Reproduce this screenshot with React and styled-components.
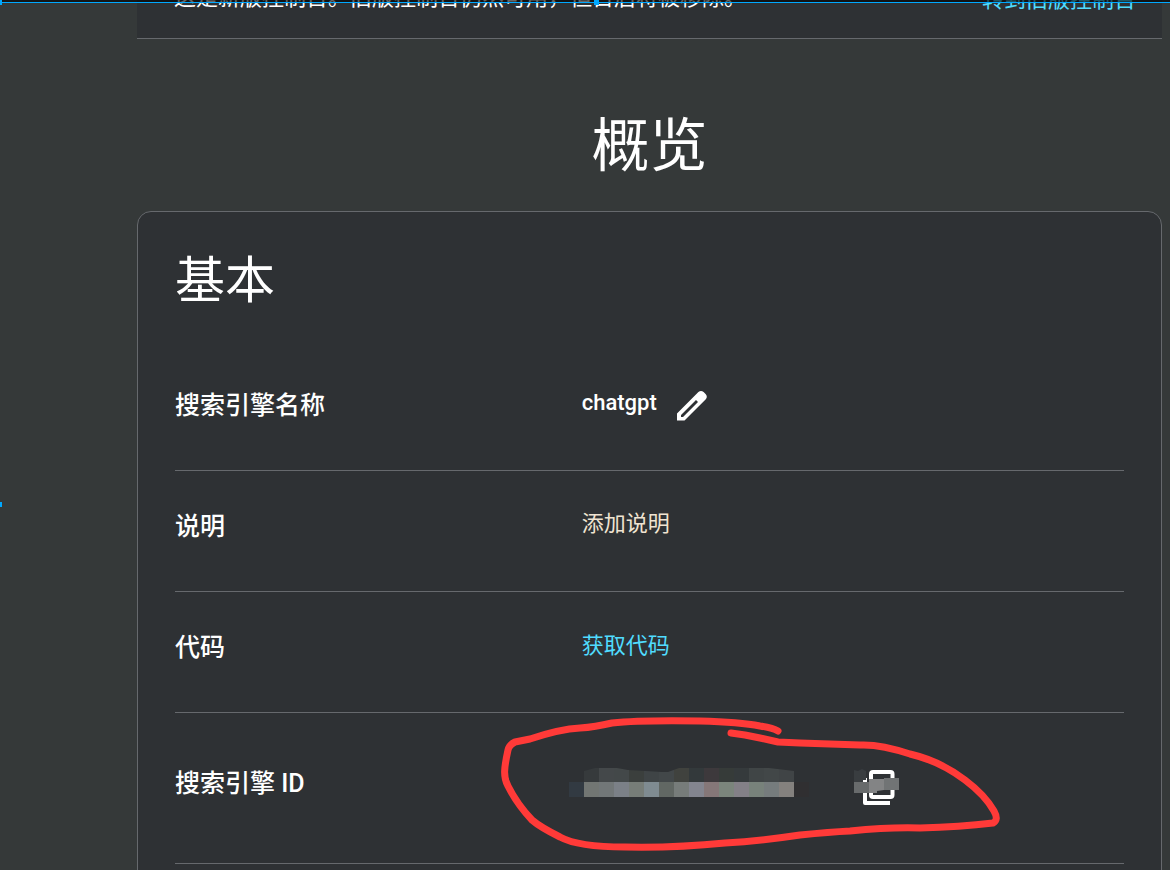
import React from 'react';
import styled, { createGlobalStyle } from 'styled-components';

const MOSAIC_TOP = ['#363a3c', '#44484a', '#434849', '#3b3f3d', '#3f4446', '#424749', '#40423e', '#33393b', '#3d393c', '#363b39', '#353a3c', '#404546', '#424748', '#404446'];
const MOSAIC_BOTTOM = ['#727673', '#727778', '#7b8087', '#777d78', '#7f8b91', '#616763', '#777c7a', '#83858f', '#857778', '#7b857c', '#838087', '#78827b', '#767c7d', '#84817e'];

function Row({ label, tall, children }) {
  return (
    <RowContainer $tall={tall}>
      <Label>{label}</Label>
      <Value $tall={tall}>{children}</Value>
    </RowContainer>
  );
}

function HiddenId() {
  return (
    <Mosaic viewBox="0 0 240 34" shapeRendering="crispEdges" aria-hidden="true">
      <clipPath id="top">
        <path d="M15 4L26 1H48L59 3L77 4L93 5H99L110 1H200L217 3L225 4V15H15Z" />
      </clipPath>
      <g clipPath="url(#top)">
        {MOSAIC_TOP.map((color, i) => (
          <rect key={i} x={15 + i * 15} y="0" width="15" height="15" fill={color} />
        ))}
      </g>
      <rect x="0" y="15" width="15" height="15" fill="#323a42" />
      {MOSAIC_BOTTOM.map((color, i) => (
        <rect key={i} x={15 + i * 15} y="15" width="15" height="15" fill={color} />
      ))}
      <rect x="225" y="15" width="15" height="15" fill="#302f31" />
    </Mosaic>
  );
}

function App() {
  return (
    <Page>
      <GlobalStyle />
      <Shade>
        <Handle />
        <Handle $middle />
      </Shade>
      <SideHandle />
      <Main>
        <Banner>
          <span>这是新版控制台。旧版控制台仍然可用，但日后将被移除。</span>
          <BannerLink href="#old">转到旧版控制台</BannerLink>
        </Banner>
        <Heading>概览</Heading>
        <Card>
          <CardTitle>基本</CardTitle>
          <Row label="搜索引擎名称">
            <Name>chatgpt</Name>
            <IconButton type="button" aria-label="修改名称">
              <svg width="30" height="30" viewBox="0 0 30 30">
                <path
                  fill="#fff"
                  fillRule="evenodd"
                  d="M0 22.5L21.4 1.1Q24 -1 26.6 1.1L28.8 3.3Q30.8 5.8 28.8 8.2L7.5 29.5H0ZM4 24V26H6L21 11L19 9Z"
                />
              </svg>
            </IconButton>
          </Row>
          <Row label="说明">
            <Hint>添加说明</Hint>
          </Row>
          <Row label="代码">
            <CodeLink href="#code">获取代码</CodeLink>
          </Row>
          <Row label="搜索引擎 ID" tall>
            <HiddenId />
            <CopyButton type="button" aria-label="复制">
              <svg width="46" height="44" viewBox="0 -6 46 44">
                <rect x="17" y="4" width="21.5" height="25" rx="2" fill="none" stroke="#fff" strokeWidth="4" />
                <path d="M11 10V35H36" fill="none" stroke="#fff" strokeWidth="4" strokeLinejoin="round" />
                <path d="M0 2L4 3L8 1L12 3V12H9V14H0Z" fill="#393d40" />
                <path d="M0 14H15V25H0Z" fill="#686b6c" />
                <path d="M15 11H30V22L23 23V25H15Z" fill="#838485" />
                <path d="M30 10H45V22H30Z" fill="#717475" />
              </svg>
            </CopyButton>
            <Scribble viewBox="500 713 500 150" aria-hidden="true">
              <path d="M778 731Q773 728 760 726Q740 722 700 721Q640 720 612 723Q595 727 580 728Q560 729 530 739L515 742Q509 745 508 750C504 768 503 777 508 786Q517 804 532 820Q540 827 560 837Q578 847 625 847Q675 848 725 843Q760 841 800 835Q830 832 850 831Q890 827 920 828Q960 827 993 823Q999 820 994 811Q985 795 965 780Q940 761 910 754Q880 744 860 745L800 743L778 742L760 738L745 735L731 733" />
            </Scribble>
          </Row>
        </Card>
      </Main>
    </Page>
  );
}

export default App;

const GlobalStyle = createGlobalStyle`
  * {
    box-sizing: border-box;
  }

  body {
    margin: 0;
    background-color: #353939;
    color: #fff;
    font-family: Roboto, 'Noto Sans CJK SC', sans-serif;
    overflow: hidden;
  }
`;

const Page = styled.div`
  position: relative;
  height: 100vh;
  overflow: hidden;
`;

const Shade = styled.div`
  position: absolute;
  z-index: 1;
  top: 0;
  left: 0;
  right: 0;
  height: 3px;
  background-color: rgba(0, 0, 0, 0.6);
  border-bottom: 1px solid #00a8ff;
`;

const Handle = styled.i`
  position: absolute;
  top: 0;
  left: ${({ $middle }) => ($middle ? '51%' : '0')};
  width: ${({ $middle }) => ($middle ? '5px' : '2px')};
  height: 5px;
  margin-left: ${({ $middle }) => ($middle ? '-3px' : '0')};
  background-color: #00a8ff;
`;

const SideHandle = styled.i`
  position: absolute;
  left: 0;
  top: 58%;
  width: 2px;
  height: 5px;
  margin-top: -3px;
  background-color: #00a8ff;
`;

const Main = styled.main`
  margin: 0 8px 0 137px;
`;

const Banner = styled.div`
  display: flex;
  justify-content: space-between;
  margin-top: -16px;
  padding: 0 26px 24px 37px;
  border-bottom: 1px solid #66696d;
  background-color: #2e3134;
  font-size: 22px;
  line-height: 28px;
`;

const Link = styled.a`
  color: #50dcff;
  font-size: 22px;
  text-decoration: none;
`;

const BannerLink = styled(Link)`
  padding-top: 2px;
`;

const Heading = styled.h1`
  margin: 67px 0 25px;
  font-size: 58px;
  font-weight: 400;
  line-height: 80px;
  text-align: center;
`;

const Card = styled.section`
  padding: 34px 37px;
  border: 1px solid #66696d;
  border-radius: 14px;
  background-color: #2e3134;
`;

const CardTitle = styled.h2`
  margin: 0 0 34px;
  font-size: 50px;
  font-weight: 400;
  line-height: 70px;
`;

const RowContainer = styled.div`
  position: relative;
  display: grid;
  grid-template-columns: 3fr 4fr;
  align-items: center;
  height: ${({ $tall }) => ($tall ? '151px' : '121px')};
  padding-bottom: 8px;
  border-bottom: 1px solid #66696d;
`;

const Label = styled.div`
  font-size: 25px;
  font-weight: 500;
  line-height: 36px;
`;

const Value = styled.div`
  display: flex;
  align-items: center;
  margin-left: ${({ $tall }) => ($tall ? '-13px' : '0')};
  font-size: 22px;
  line-height: 32px;
`;

const Name = styled.span`
  padding-bottom: 6px;
  font-weight: 500;
`;

const Hint = styled.span`
  padding-bottom: 6px;
  color: #f0e4d2;
`;

const CodeLink = styled(Link)`
  padding-bottom: 4px;
`;

const IconButton = styled.button`
  display: flex;
  margin-left: 20px;
  padding: 0;
  border: 0;
  background: none;
  cursor: pointer;
`;

const CopyButton = styled(IconButton)`
  margin-left: 45px;
`;

const Mosaic = styled.svg`
  width: 240px;
  height: 34px;
`;

const Scribble = styled.svg`
  position: absolute;
  top: 0;
  left: 325px;
  width: 500px;
  height: 150px;
  overflow: visible;
  pointer-events: none;

  path {
    fill: none;
    stroke: #ff3a38;
    stroke-width: 7px;
    stroke-linecap: round;
    stroke-linejoin: round;
  }
`;
